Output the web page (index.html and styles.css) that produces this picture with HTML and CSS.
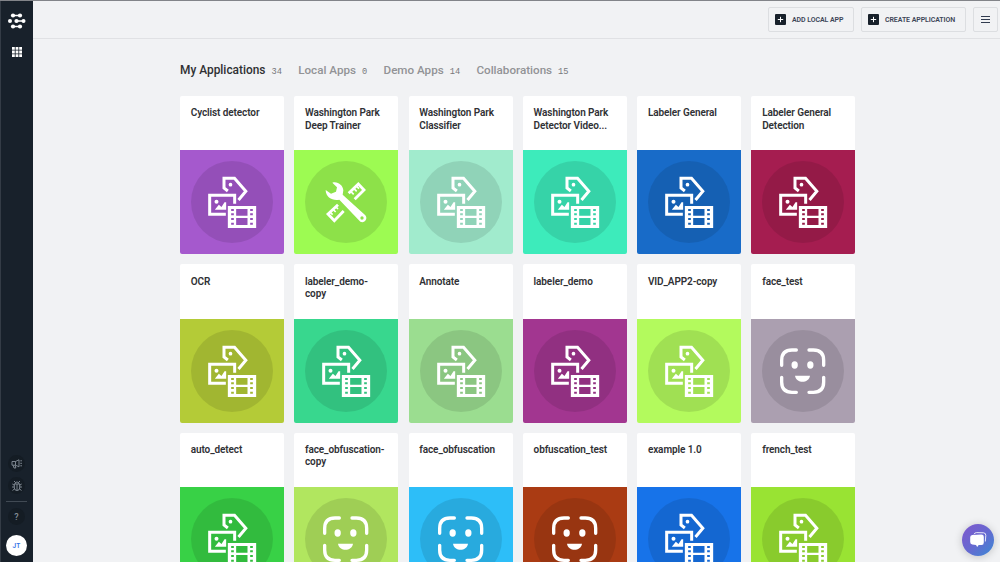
FILE: index.html
```html
<!DOCTYPE html>
<html lang="en">
<head>
<meta charset="utf-8">
<title>My Applications</title>
<link rel="stylesheet" href="styles.css">
</head>
<body>
<svg class="defs" aria-hidden="true">
  <symbol id="media" viewBox="0 0 312 312">
    <circle cx="156" cy="156" r="123" fill="#000" opacity=".1"/>
    <g transform="translate(-14.500 -13)" fill="none" stroke="#fff" stroke-width="9">
      <path d="M158 136L146.500 127V97.500H178L212 137L190 163"/>
      <circle cx="166" cy="117" r="5.500" fill="#fff" stroke="none"/>
      <path d="M152 205.500H103.500V148.500H178.500V174"/>
      <circle cx="124" cy="168" r="6" fill="#fff" stroke="none"/>
      <path d="M119 192L131 177L139 184L148 170H153V192Z" fill="#fff" stroke="none"/>
      <path fill="#fff" stroke="none" fill-rule="evenodd" d="M158 181H243V247H158ZM183 190V210H217V190ZM183 217V238H217V217ZM168 190V196H176V190ZM168 203V209H176V203ZM168 217V223H176V217ZM168 231V237H176V231ZM225 190V196H233V190ZM225 203V209H233V203ZM225 217V223H233V217ZM225 231V237H233V231Z"/>
    </g>
  </symbol>
  <symbol id="tools" viewBox="0 0 312 312">
    <circle cx="156" cy="156" r="123" fill="#000" opacity=".1"/>
    <g transform="translate(-13 -14)">
      <path fill="#fff" fill-rule="evenodd" d="M128 112C144 107 160 120 161 135L159 148L227 210C236 221 224 235 212 229L149 163C130 167 108 157 108 134L124 145L139 139L142 126ZM212 218A5 5 0 1 0 222 218A5 5 0 1 0 212 218Z"/>
      <path fill="none" stroke="#fff" stroke-width="8.500" d="M177 144L206 116L223 134L195 162M145 178L115 206L134 226L162 197"/>
      <path fill="none" stroke="#fff" stroke-width="5" d="M184 139l8 8M193 130l8 8M201 123l7 7M121 200l8 8M130 192l8 8M138 184l7 7"/>
    </g>
  </symbol>
  <symbol id="face" viewBox="0 0 312 312">
    <circle cx="156" cy="156" r="123" fill="#000" opacity=".1"/>
    <g fill="none" stroke="#fff" stroke-width="10" stroke-linecap="round">
      <path d="M92 139V124Q92 93 123 93H136M174 93H187Q218 93 218 124V139M218 175V189Q218 220 187 220H174M136 220H123Q92 220 92 189V175"/>
    </g>
    <g fill="#fff"><ellipse cx="131" cy="138" rx="9.500" ry="11"/><ellipse cx="178" cy="138" rx="9.500" ry="11"/><path d="M132 170H177C173 194 136 194 132 170Z"/></g>
  </symbol>
</svg>

<nav class="sidebar">
  <div class="side-top">
    <svg class="logo" viewBox="0 0 18 16" fill="#fff" stroke="#fff"><path fill="none" stroke-width="1.300" d="M5 2.500H12M8.500 8H15.500M5 13.500H12"/><g stroke="none"><circle cx="5" cy="2.500" r="2.100"/><circle cx="12" cy="2.500" r="2.100"/><circle cx="2" cy="8" r="2"/><circle cx="8.500" cy="8" r="2.100"/><circle cx="15.500" cy="8" r="2"/><circle cx="5" cy="13.500" r="2.100"/><circle cx="12" cy="13.500" r="2.100"/></g></svg>
    <svg class="apps" viewBox="0 0 10 10" fill="#fff"><path d="M0 0h2.800v2.800H0zM3.600 0h2.800v2.800H3.600zM7.200 0H10v2.800H7.200zM0 3.600h2.800v2.800H0zM3.600 3.600h2.800v2.800H3.600zM7.200 3.600H10v2.800H7.200zM0 7.200h2.800V10H0zM3.600 7.200h2.800V10H3.600zM7.200 7.200H10V10H7.200z"/></svg>
  </div>
  <div class="side-bottom">
    <span class="round"><svg viewBox="0 0 12 12"><path d="M1 3.500H4.500L8 1.800V8.800L4.500 7.200H1ZM2.200 7.300L3 10H4.800L4.200 7.300M4.500 3.500V7.200M9.300 2.800H11M9.300 5.300H11M9.300 7.800H11"/></svg></span>
    <span class="round"><svg viewBox="0 0 12 12"><path d="M3.300 4H8.700V8Q8.500 10.500 6 10.500Q3.500 10.500 3.300 8ZM4 4Q4 2 6 2Q8 2 8 4M6 4V10.500M3 1L4.600 2.600M9 1L7.400 2.600M1.300 4L3.300 5.200M10.700 4L8.700 5.200M1 7H3.300M11 7H8.700M1.500 10.500L3.600 8.800M10.500 10.500L8.400 8.800"/></svg></span>
    <hr class="divider">
    <span class="round help">?</span>
    <span class="avatar">JT</span>
  </div>
</nav>

<div class="page">
  <header class="topbar">
    <button class="btn local"><svg viewBox="0 0 11 11"><rect width="11" height="11" rx="1" fill="#18212b"/><path d="M5.500 2.800V8.200M2.800 5.500H8.200" stroke="#fff"/></svg><span>ADD LOCAL APP</span></button>
    <button class="btn create"><svg viewBox="0 0 11 11"><rect width="11" height="11" rx="1" fill="#18212b"/><path d="M5.500 2.800V8.200M2.800 5.500H8.200" stroke="#fff"/></svg><span>CREATE APPLICATION</span></button>
    <button class="btn menu"><svg viewBox="0 0 9 7"><path d="M0 .5H9M0 3.500H9M0 6.500H9" stroke="#323c50" stroke-width="1.100"/></svg></button>
  </header>
  <main class="content">
    <div class="tabs">
      <a class="tab active">My Applications<span class="count">34</span></a>
      <a class="tab">Local Apps<span class="count">0</span></a>
      <a class="tab">Demo Apps<span class="count">14</span></a>
      <a class="tab">Collaborations<span class="count">15</span></a>
    </div>
    <div class="grid">
      <article class="card"><h3>Cyclist detector</h3><svg class="tile purple"><use href="#media"/></svg></article>
      <article class="card"><h3>Washington Park<br>Deep Trainer</h3><svg class="tile lime"><use href="#tools"/></svg></article>
      <article class="card"><h3>Washington Park<br>Classifier</h3><svg class="tile mint"><use href="#media"/></svg></article>
      <article class="card"><h3>Washington Park<br>Detector Video...</h3><svg class="tile aqua"><use href="#media"/></svg></article>
      <article class="card"><h3>Labeler General</h3><svg class="tile blue"><use href="#media"/></svg></article>
      <article class="card"><h3>Labeler General<br>Detection</h3><svg class="tile crimson"><use href="#media"/></svg></article>
      <article class="card"><h3>OCR</h3><svg class="tile olive"><use href="#media"/></svg></article>
      <article class="card"><h3>labeler_demo-<br>copy</h3><svg class="tile jade"><use href="#media"/></svg></article>
      <article class="card"><h3>Annotate</h3><svg class="tile sage"><use href="#media"/></svg></article>
      <article class="card"><h3>labeler_demo</h3><svg class="tile plum"><use href="#media"/></svg></article>
      <article class="card"><h3>VID_APP2-copy</h3><svg class="tile citron"><use href="#media"/></svg></article>
      <article class="card"><h3>face_test</h3><svg class="tile mauve"><use href="#face"/></svg></article>
      <article class="card"><h3>auto_detect</h3><svg class="tile green"><use href="#media"/></svg></article>
      <article class="card"><h3>face_obfuscation-<br>copy</h3><svg class="tile pear"><use href="#face"/></svg></article>
      <article class="card"><h3>face_obfuscation</h3><svg class="tile sky"><use href="#face"/></svg></article>
      <article class="card"><h3>obfuscation_test</h3><svg class="tile rust"><use href="#face"/></svg></article>
      <article class="card"><h3>example 1.0</h3><svg class="tile azure"><use href="#media"/></svg></article>
      <article class="card"><h3>french_test</h3><svg class="tile leaf"><use href="#media"/></svg></article>
    </div>
  </main>
</div>

<button class="chat" aria-label="Chat"><svg viewBox="0 0 18 18"><path d="M5 3.200Q5.500 1.800 7.500 1.600L14.500 1.800Q17 2 16.800 4.500L16.300 10.500" fill="none" stroke="#fff" opacity=".85"/><path d="M3.200 4L12.200 3.400Q14.800 3.300 14.800 5.800V11.500Q14.800 14 12.500 14H9.700L8.200 16L7 14L3.300 13.600Q1.200 13.300 1.200 11V6.200Q1.200 4.200 3.200 4Z" fill="#fff"/></svg></button>
</body>
</html>
```

FILE: styles.css
```css
* { box-sizing: border-box; }
body {
  margin: 0;
  width: 1000px;
  height: 562px;
  overflow: hidden;
  display: flex;
  background: #f1f2f4;
  border-top: 1px solid #828489;
  font-family: Roboto, "Liberation Sans", sans-serif;
}
.defs { position: absolute; width: 0; height: 0; }
button { font: inherit; padding: 0; }

.sidebar {
  width: 33px;
  flex: none;
  background: #18212b;
  border-left: 1px solid #343c46;
  display: flex;
  flex-direction: column;
  justify-content: space-between;
  align-items: center;
  padding: 12px 1px 6px 0;
}
.side-top, .side-bottom { display: flex; flex-direction: column; align-items: center; }
.side-top { gap: 18px; }
.logo { width: 18px; height: 16px; }
.apps { width: 10px; height: 10px; }
.round {
  width: 17px;
  height: 17px;
  border-radius: 50%;
  background: #141c24;
  display: flex;
  align-items: center;
  justify-content: center;
  margin-bottom: 5px;
}
.round svg { width: 12px; height: 12px; fill: none; stroke: #87909a; stroke-width: .9; }
.divider { width: 21px; height: 1px; border: 0; background: #414a54; margin: 2px 0 6px; }
.help { color: #87909a; font-size: 9px; font-weight: 500; margin-bottom: 10px; }
.avatar {
  width: 21px;
  height: 21px;
  border-radius: 50%;
  background: #fff;
  color: #3474e8;
  font-size: 6.500px;
  font-weight: 600;
  letter-spacing: .3px;
  display: flex;
  align-items: center;
  justify-content: center;
}

.page { flex: 1; min-width: 0; }
.topbar {
  height: 38px;
  border-bottom: 1px solid #e0e1e4;
  display: flex;
  justify-content: flex-end;
  gap: 7px;
  padding: 6px 2px 0 0;
}
.btn {
  height: 25px;
  border: 1px solid #dcdee1;
  border-radius: 2px;
  background: transparent;
  color: #3d4658;
  font-size: 7px;
  font-weight: 600;
  letter-spacing: -.08px;
  display: flex;
  align-items: center;
  gap: 6px;
  padding-left: 6px;
  white-space: nowrap;
}
.btn svg { width: 11px; height: 11px; flex: none; }
.local { width: 86px; }
.create { width: 105px; }
.btn.menu { width: 25px; padding: 0; justify-content: center; }
.btn.menu svg { width: 9px; height: 7px; }

.content { padding: 23px 0 0 147px; }
.tabs { display: flex; height: 34px; }
.tab {
  color: #929396;
  font-size: 11.650px;
  font-weight: 500;
  line-height: 17px;
  white-space: nowrap;
  margin-right: 16.300px;
}
.active { color: #2f3033; font-size: 11.900px; }
.count {
  font: 8.700px/16px "Liberation Mono", monospace;
  color: #77787b;
  margin-left: 6px;
}
.grid {
  display: grid;
  grid-template-columns: repeat(6, 104px);
  column-gap: 10.300px;
  row-gap: 10.250px;
}
.card { height: 158.200px; background: #fff; border-radius: 2px; overflow: hidden; }
.card h3 {
  margin: 0;
  height: 54.200px;
  padding: 11.100px 0 0 10.700px;
  font-size: 10px;
  line-height: 12.500px;
  font-weight: 600;
  letter-spacing: -.1px;
  color: #303135;
  white-space: nowrap;
}
.tile { display: block; width: 104px; height: 104px; }
.purple { background: #a559cd; }
.lime { background: #9dfb52; }
.mint { background: #a1ebcd; }
.aqua { background: #3debbb; }
.blue { background: #186bc8; }
.crimson { background: #a51d50; }
.olive { background: #b4cb37; }
.jade { background: #38d78e; }
.sage { background: #9bdd90; }
.plum { background: #a23690; }
.citron { background: #b3fa5d; }
.mauve { background: #ab9fb0; }
.green { background: #38d146; }
.pear { background: #b1e65f; }
.sky { background: #2dbef8; }
.rust { background: #aa3b13; }
.azure { background: #1773e9; }
.leaf { background: #99e333; }

.chat {
  position: absolute;
  left: 962px;
  top: 524px;
  width: 32px;
  height: 32px;
  border: 0;
  border-radius: 50%;
  background: linear-gradient(135deg, #7b5bce 10%, #6768d0 50%, #3f86d4 95%);
  box-shadow: 0 1px 8px rgba(0, 0, 0, .2);
  display: flex;
  align-items: center;
  justify-content: center;
}
.chat svg { width: 18px; height: 18px; }
```
